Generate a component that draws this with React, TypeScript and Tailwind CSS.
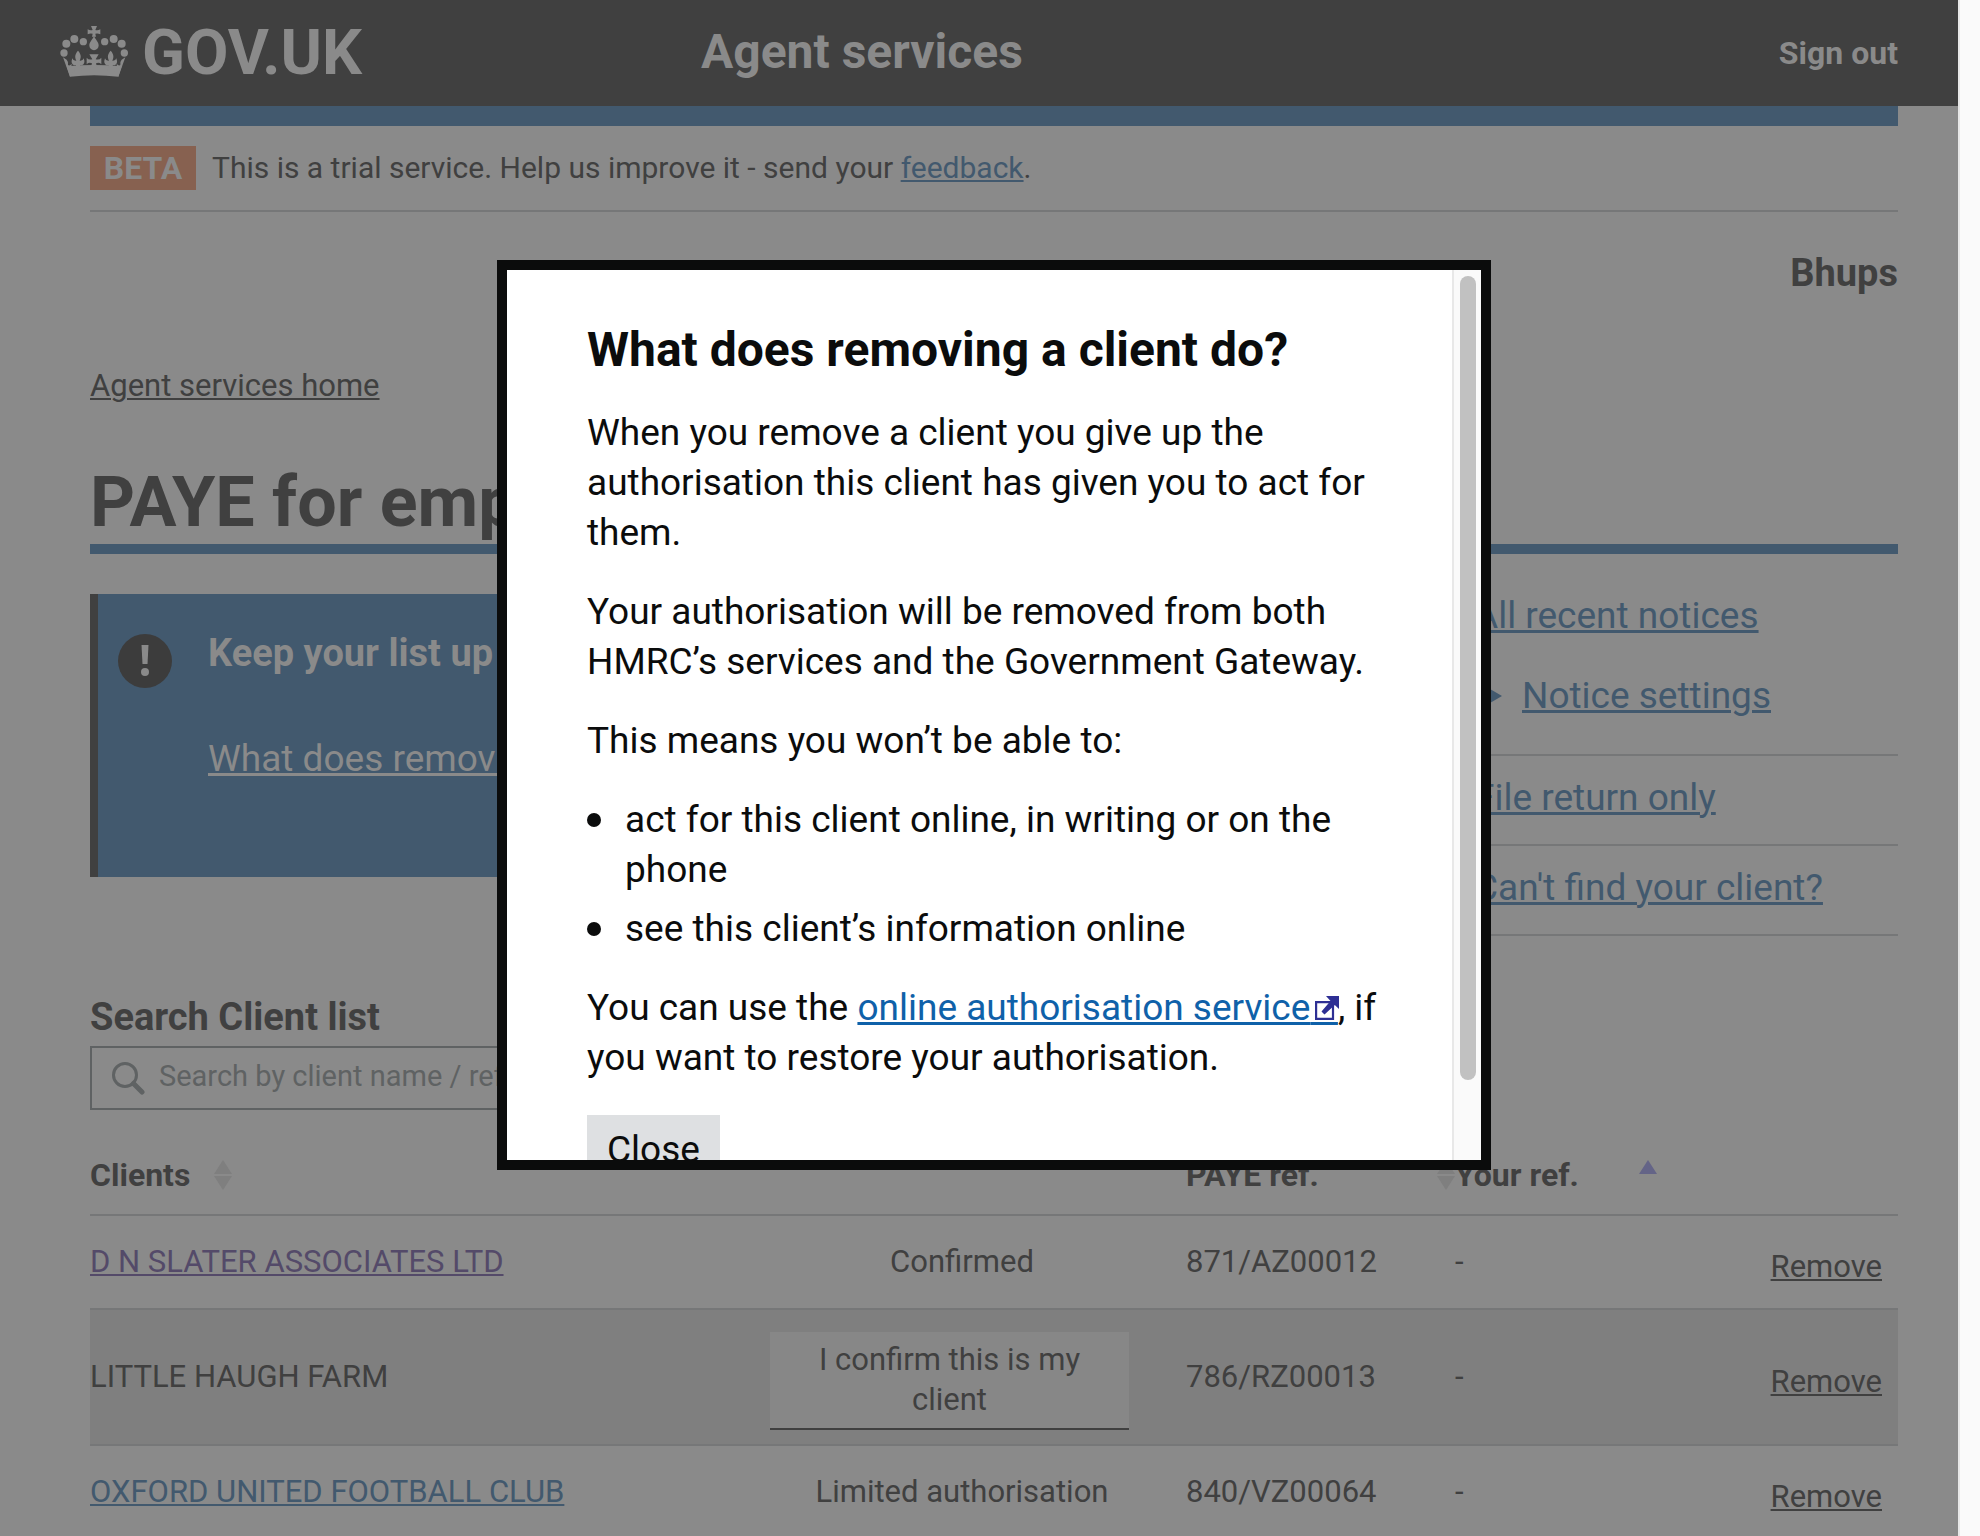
import React from 'react';

type Client = {
  name: string;
  link?: 'visited' | 'unvisited';
  status: string;
  confirm?: boolean;
  paye: string;
  yourRef: string;
};

const clients: Client[] = [
  { name: 'D N SLATER ASSOCIATES LTD', link: 'visited', status: 'Confirmed', paye: '871/AZ00012', yourRef: '-' },
  { name: 'LITTLE HAUGH FARM', status: 'I confirm this is my client', confirm: true, paye: '786/RZ00013', yourRef: '-' },
  { name: 'OXFORD UNITED FOOTBALL CLUB', link: 'unvisited', status: 'Limited authorisation', paye: '840/VZ00064', yourRef: '-' },
];

const nameColours = {
  visited: 'text-[#544a69]',
  unvisited: 'text-[#42596e]',
};

function Crown() {
  return (
    <svg viewBox="32 44 204 156" className="mb-1 h-[52px] w-[68px]" fill="currentColor" aria-hidden="true">
      <circle cx="44" cy="128" r="11" />
      <circle cx="51" cy="100" r="12" />
      <circle cx="75" cy="86" r="12" />
      <circle cx="102" cy="94" r="11" />
      <circle cx="166" cy="94" r="11" />
      <circle cx="193" cy="86" r="12" />
      <circle cx="217" cy="100" r="12" />
      <circle cx="225" cy="128" r="11" />
      <path d="M125 47h18l-5 12q8 2 15-2v15q-7-4-15-2l2 9h-12l2-9q-8-2-15 2V57q7 4 15 2z" />
      <path d="M134 76c3 10 14 18 14 29a14 15 0 0 1-28 0c0-11 11-19 14-29z" />
      <path d="M52 168Q134 160 217 168L207 199Q134 190 62 199Z" />
      <path d="M41 141L62 199L76 180Q64 174 67 160Q61 168 56 164Q59 156 52 148Z" />
      <path d="M228 141L207 199L193 180Q205 174 202 160Q208 168 213 164Q210 156 217 148Z" />
      <path d="M86 121C96 132 96 141 91 151Q101 152 103 144Q109 160 98 165L92 164L97 182H75L80 164L74 165Q63 160 69 144Q71 152 81 151C76 141 76 132 86 121Z" />
      <path d="M184 121C194 132 194 141 189 151Q199 152 201 144Q207 160 196 165L190 164L195 182H173L178 164L172 165Q161 160 167 144Q169 152 179 151C174 141 174 132 184 121Z" />
      <path d="M120 132h28l-9 15q11 3 17-5v20q-7-7-16-3l6 22h-24l6-22q-9-4-16 3v-20q6 8 17 5z" />
    </svg>
  );
}

function SearchIcon() {
  return (
    <svg viewBox="0 0 34 34" className="h-[34px] w-[34px] shrink-0" fill="none" stroke="currentColor" aria-hidden="true">
      <circle cx="14" cy="14" r="11.5" strokeWidth="3" />
      <path d="M22.5 22.5L31 31" strokeWidth="5" strokeLinecap="round" />
    </svg>
  );
}

function ExternalIcon() {
  return (
    <svg viewBox="0 0 24 24" className="absolute -right-px bottom-[9px] h-6 w-6 text-[#2e2f94]" aria-hidden="true">
      <path d="M1.1 6.1H18V22.9H1.1Z" fill="none" stroke="currentColor" strokeWidth="2.2" />
      <path d="M11 0H24V13L19.8 9L9.5 18.5L6.5 15.5L15.5 5Z" fill="currentColor" />
    </svg>
  );
}

function SortIcon({ ascending = false }: { ascending?: boolean }) {
  return (
    <svg viewBox="0 0 18 32" className="h-8 w-[18px] shrink-0" aria-hidden="true">
      <path d="M9 1L18 15H0Z" fill={ascending ? '#646487' : '#7f7f7f'} />
      {!ascending && <path d="M9 31L18 17H0Z" fill="#7f7f7f" />}
    </svg>
  );
}

function SideLink({ children }: { children: React.ReactNode }) {
  return (
    <a href="#" className="text-[#42596e] underline decoration-[3px] underline-offset-2">
      {children}
    </a>
  );
}

function ClientRow({ client }: { client: Client }) {
  const cell = client.confirm
    ? 'border-b-2 border-[#767778] bg-[#7f7f7f] p-0'
    : 'border-b-2 border-[#767778] py-[26px] px-0';
  return (
    <tr>
      <td className={cell}>
        {client.link ? (
          <a href="#" className={`underline decoration-2 underline-offset-2 ${nameColours[client.link]}`}>
            {client.name}
          </a>
        ) : (
          client.name
        )}
      </td>
      <td className={cell}>
        {client.confirm ? (
          <div className="pt-[22px] pb-[14px]">
            <button type="button" className="w-[359px] border-b-2 border-[#404040] bg-[#878787] px-10 py-2 text-center">
              {client.status}
            </button>
          </div>
        ) : (
          <div className="pr-8 text-center">{client.status}</div>
        )}
      </td>
      <td className={cell}>{client.paye}</td>
      <td className={cell}>{client.yourRef}</td>
      <td className={cell}>
        <div className="-mb-2.5 pr-4 text-right">
          <a href="#" className="underline decoration-2 underline-offset-2">
            Remove
          </a>
        </div>
      </td>
    </tr>
  );
}

function HelpDialog() {
  return (
    <div className="absolute inset-0 flex items-start justify-center pt-[260px] pl-2">
      <section
        role="dialog"
        aria-modal="true"
        aria-labelledby="dialog-title"
        className="flex h-[910px] w-[994px] overflow-hidden border-10 border-[#0b0c0c] bg-white text-[37px] leading-[50px] text-[#0b0c0c]"
      >
        <div className="flex-1 overflow-hidden pt-[55px] pr-16 pl-20">
          <h2 id="dialog-title" className="mb-[33px] text-5xl leading-[50px] font-bold">
            What does removing a client do?
          </h2>
          <p className="mb-[29px]">
            When you remove a client you give up the authorisation this client has given you to act for them.
          </p>
          <p className="mb-[29px]">
            Your authorisation will be removed from both HMRC’s services and the Government Gateway.
          </p>
          <p className="mb-[29px]">This means you won’t be able to:</p>
          <ul className="mb-[29px] flex flex-col gap-[9px]">
            {['act for this client online, in writing or on the phone', 'see this client’s information online'].map((item) => (
              <li key={item} className="flex gap-6">
                <span className="mt-[18px] h-[14px] w-[14px] shrink-0 rounded-full bg-[#0b0c0c]" />
                {item}
              </li>
            ))}
          </ul>
          <p className="mb-8">
            You can use the{' '}
            <a href="#" className="text-[#0f61a9] underline decoration-[3px] underline-offset-2">
              online authorisation service
              <span className="relative">
                {'\u00a0\u00a0\u00a0'}
                <ExternalIcon />
              </span>
            </a>
            , if you want to restore your authorisation.
          </p>
          <button type="button" className="bg-[#dee0e2] px-5 py-2.5">
            Close
          </button>
        </div>
        <div className="w-[29px] shrink-0 border-l-2 border-[#e8e8e8] bg-[#fafafa] pt-1.5 pl-1.5">
          <div className="h-[804px] w-4 rounded-full bg-[#c1c1c1]" />
        </div>
      </section>
    </div>
  );
}

export default function App() {
  return (
    <div className="relative flex h-screen overflow-hidden bg-[#8a8a8a] font-['Roboto',sans-serif] text-[31px] leading-10 text-[#404040]">
      <div className="min-w-0 flex-1">
        <header className="flex h-[106px] items-center bg-[#404040] pr-[60px] pl-[60px] font-bold text-[#8a8a8a]">
          <a href="#" className="flex w-[641px] items-center gap-3.5 text-[63px]">
            <Crown />
            GOV.UK
          </a>
          <a href="#" className="flex-1 pb-0.5 text-5xl">
            Agent services
          </a>
          <a href="#" className="text-[32px]">
            Sign out
          </a>
        </header>

        <div className="pr-[60px] pl-[90px]">
          <div className="h-5 bg-[#42596e]" />
          <div className="flex items-center gap-4 border-b-2 border-[#767778] py-5">
            <strong className="w-[106px] bg-[#876150] text-center text-[32px] leading-[44px] text-[#8a8a8a]">BETA</strong>
            <p className="text-[30px]">
              This is a trial service. Help us improve it - send your{' '}
              <a href="#" className="text-[#42596e] underline decoration-2 underline-offset-2">
                feedback
              </a>
              .
            </p>
          </div>

          <p className="mt-9 text-right text-[38px] leading-[50px] font-bold">Bhups</p>
          <nav className="mt-[68px]">
            <a href="#" className="underline decoration-2 underline-offset-2">
              Agent services home
            </a>
          </nav>
          <h1 className="mt-14 border-b-10 border-[#42596e] pb-0.5 text-[70px] leading-[80px] font-bold">
            PAYE for employers
          </h1>

          <div className="mt-10 flex gap-[60px] text-[37px] leading-[44px]">
            <section className="flex h-[283px] flex-1 items-start gap-9 border-l-8 border-[#404040] bg-[#42596e] pt-[37px] pl-5 text-[#8a8a8a]">
              <svg viewBox="0 0 54 54" className="mt-[3px] h-[54px] w-[54px] shrink-0 text-[#3c3c3c]" aria-hidden="true">
                <circle cx="27" cy="27" r="27" fill="currentColor" />
                <path d="M23.5 11H30.5L29.5 30H24.5Z" fill="#8a8a8a" />
                <circle cx="27" cy="38" r="4" fill="#8a8a8a" />
              </svg>
              <div>
                <h2 className="text-[38px] font-bold">Keep your list up to date</h2>
                <p className="mt-[62px]">
                  <a href="#" className="underline decoration-[3px] underline-offset-2">
                    What does removing a client do?
                  </a>
                </p>
              </div>
            </section>
            <aside className="w-[424px]">
              <div className="flex flex-col gap-9 border-b-2 border-[#767778] pb-9">
                <div>
                  <SideLink>All recent notices</SideLink>
                </div>
                <div className="flex items-center gap-5 pl-1">
                  <svg viewBox="0 0 24 28" className="h-7 w-6 text-[#42596e]" fill="currentColor" aria-hidden="true">
                    <path d="M0 0L24 14L0 28Z" />
                  </svg>
                  <SideLink>Notice settings</SideLink>
                </div>
              </div>
              <div className="border-b-2 border-[#767778] pt-5 pb-6">
                <SideLink>File return only</SideLink>
              </div>
              <div className="border-b-2 border-[#767778] pt-5 pb-6">
                <SideLink>Can't find your client?</SideLink>
              </div>
            </aside>
          </div>

          <form className="mt-14">
            <label htmlFor="client-search" className="mb-1 block text-[38px] leading-[50px] font-bold">
              Search Client list
            </label>
            <div className="flex h-16 w-[600px] items-center gap-3.5 border-2 border-[#5f6263] px-[19px] text-[#5f6263]">
              <SearchIcon />
              <input
                id="client-search"
                type="text"
                placeholder="Search by client name / reference"
                className="mb-1 w-full bg-transparent text-[29px] outline-none placeholder:text-[#5f6263]"
              />
            </div>
          </form>

          <table className="w-full table-fixed border-separate border-spacing-0 text-left">
            <colgroup>
              <col />
              <col className="w-[416px]" />
              <col className="w-[269px]" />
              <col className="w-[202px]" />
              <col className="w-[241px]" />
            </colgroup>
            <thead className="text-[32px]">
              <tr>
                <th className="border-b-2 border-[#767778] px-0 pt-[45px] pb-[19px]">
                  <div className="flex items-center gap-6">
                    Clients <SortIcon />
                  </div>
                </th>
                <th className="border-b-2 border-[#767778]" />
                <th className="border-b-2 border-[#767778] px-0 pt-[45px] pb-[19px]">
                  <div className="flex items-center justify-between">
                    PAYE ref. <SortIcon />
                  </div>
                </th>
                <th className="border-b-2 border-[#767778] px-0 pt-[45px] pb-[19px]">
                  <div className="flex items-center justify-between">
                    Your ref. <SortIcon ascending />
                  </div>
                </th>
                <th className="border-b-2 border-[#767778]" />
              </tr>
            </thead>
            <tbody>
              {clients.map((client) => (
                <ClientRow key={client.name} client={client} />
              ))}
            </tbody>
          </table>
        </div>
      </div>
      <div className="w-[22px] shrink-0 border-l-2 border-[#e8e8e8] bg-[#fafafa]" />
      <HelpDialog />
    </div>
  );
}
